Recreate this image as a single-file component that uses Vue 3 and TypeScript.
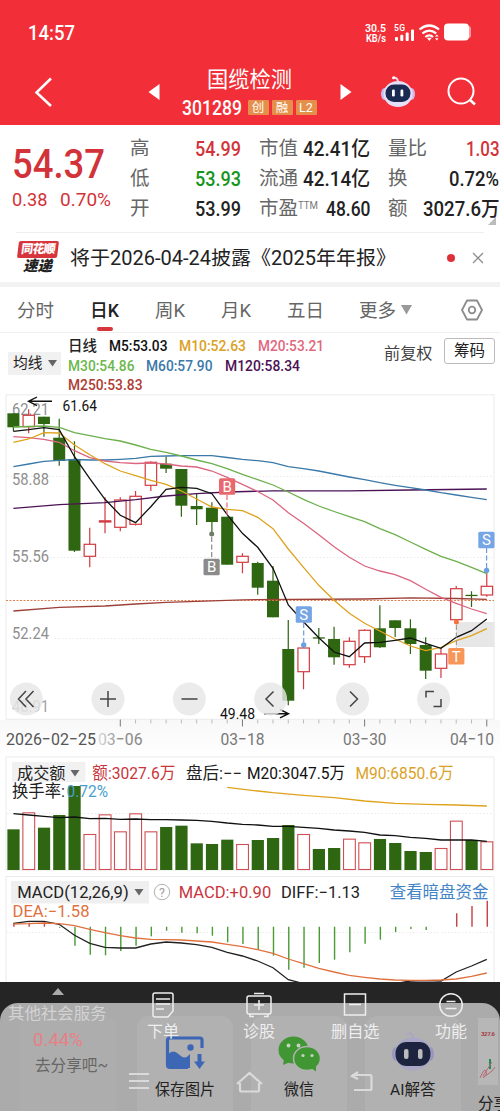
<script setup lang="ts">
import { h, type FunctionalComponent } from 'vue'

// Single line of text set to an exact width, vertically centred in its box.
const Fit: FunctionalComponent<{ t: string; w: number; s: number }> = (p) =>
  h('svg', { width: p.w, height: p.s, class: 'fit' }, [
    h('text', {
      x: 0, y: p.s * 0.86, 'font-size': p.s, textLength: p.w,
      lengthAdjust: 'spacingAndGlyphs', fill: 'currentColor',
    }, p.t),
  ])
Fit.props = ['t', 'w', 's']

const STEP = 15.27
const X0 = 13.4
const px = (i: number) => X0 + i * STEP

interface Candle { up: boolean; top: number; bot: number; hi: number; lo: number }
const raw: [number, number, number, number, number][] = [
  [0, 413.3, 427.3, 413.3, 431.3], [1, 415.3, 426.7, 409.3, 433.3], [0, 416.7, 424, 416.7, 436.7],
  [0, 437.7, 461, 418.7, 465.7], [0, 459, 550.7, 441.3, 552], [1, 544.3, 556.3, 527.7, 567.3],
  [1, 520.8, 522, 497.3, 533.3], [1, 500, 527.3, 497.3, 531.3], [1, 496.3, 524.3, 491, 525.5],
  [1, 462.3, 485.3, 461.3, 491], [0, 463.7, 468.7, 456.7, 473], [0, 469, 505.7, 469, 516.7],
  [0, 506, 509.3, 493.7, 525], [0, 507.7, 522, 502.3, 534], [0, 516.7, 564.7, 516.7, 564.7],
  [1, 556.3, 562.3, 553.3, 573.3], [0, 563, 587.7, 561.7, 594.7], [0, 580.7, 617.3, 566, 617.3],
  [0, 649, 700.7, 620, 705.3], [1, 648, 671.7, 644, 689.3], [0, 637.3, 638.6, 628, 644],
  [0, 639, 657.3, 626.7, 664.7], [1, 641.3, 664.7, 637.3, 667.7], [1, 630.3, 656.7, 629.3, 663],
  [0, 628.3, 647.3, 605.3, 648], [0, 620.3, 628, 620.3, 637], [0, 628.3, 644, 619.3, 654],
  [0, 645, 670.7, 637.3, 679], [1, 654, 668.3, 648.3, 678], [1, 588.7, 619.7, 586, 622],
  [0, 594.8, 596.1, 591.3, 607], [1, 586.3, 595, 571, 596.7],
]
const candles: Candle[] = raw.map(([u, top, bot, hi, lo]) => ({ up: u === 1, top, bot, hi, lo }))

const line = (ys: number[], start = 0) =>
  ys.map((y, i) => `${px(i + start).toFixed(1)},${y}`).join(' ')
const pairs = (ps: [number, number][]) => ps.map(([i, y]) => `${px(i).toFixed(1)},${y}`).join(' ')

const averages = [
  { c: '#9d4038', p: pairs([[0, 611], [3, 607.3], [6, 606], [8, 604], [10, 602.3], [12, 601.3], [15, 599.8], [23, 599], [26, 597.8], [29, 598.5], [31, 599.3]]) },
  { c: '#4b1355', p: pairs([[0, 508.3], [3, 504.7], [6, 502.7], [8, 499.7], [10, 496], [12, 493.7], [14, 492], [17, 490.8], [22, 490.8], [26, 490], [31, 489]]) },
  { c: '#3a79a8', p: line([466.7, 464, 461.3, 460.3, 459.5, 460, 460, 459.3, 458.3, 456.4, 456, 455.7, 455.7, 455.7, 457.5, 459.3, 460.7, 462.7, 466.7, 468.7, 471, 474, 477, 479.7, 482.7, 485.3, 487.7, 490, 492.7, 495, 497.3, 499.7]) },
  { c: '#6cb04c', p: line([427, 426.5, 426, 427.3, 432.7, 435.7, 438.7, 441, 445, 449.3, 452.3, 456, 460, 463.7, 468.7, 474.3, 479.7, 485, 492, 499.3, 506, 511.5, 516.7, 521.7, 528.7, 534.7, 542, 549.3, 556.3, 561.3, 567.3, 573.7]) },
  { c: '#dc6580', p: line([436.7, 437.7, 439.3, 442.3, 450.7, 457.7, 461, 462.7, 463.5, 463, 464, 466, 467, 471, 477.3, 484.3, 491.5, 500, 512.7, 523.3, 534.7, 546.7, 557.3, 566, 571, 574.7, 580.7, 589.3, 597.3, 603.3, 609, 613.7]) },
  { c: '#dfa21d', p: line([442.3, 439, 432.7, 433, 445, 454.7, 463.7, 471, 475.7, 480.3, 484.3, 491, 499, 507, 509.3, 510.7, 517.3, 528.7, 549, 567.3, 585.3, 600.3, 613.3, 623.3, 631, 639, 646, 650.7, 647.3, 640.7, 635.7, 628.7]) },
  { c: '#111', p: line([431.3, 429.7, 427.7, 429.7, 456.7, 478.7, 499.3, 515.3, 522.7, 506.7, 489.3, 487.3, 488.3, 493.7, 514.7, 533.3, 547.3, 568.3, 605, 621.7, 637.7, 652, 656.7, 643, 642.3, 640.3, 638, 643.3, 648.3, 637.3, 630.7, 619]) },
]

const volTops = [223, 172, 218, 180, 93, 237, 178, 229, 175, 229, 216, 212, 265, 267, 254, 267, 255, 249, 210, 237, 282, 279, 251, 262, 252, 264, 288, 291, 279, 197, 255, 259].map((z) => 755 + z / 3)
const volAvg = line([176, 180, 184, 188, 186, 191, 190, 193, 192, 194, 194, 195, 196, 199, 204, 208, 210, 214, 214, 217, 220, 225, 228, 232, 240, 242, 247, 250, 255, 255, 255, 259].map((z) => Math.round((755 + z / 3) * 10) / 10))
const volLong = pairs([[14, 787.3], [16, 791], [17, 792.7], [19, 795.3], [21, 797.7], [23, 801], [25, 803.3], [27, 804.3], [29, 805], [31, 806]])

const at870 = (z: number) => Math.round((870 + z / 3) * 10) / 10
const macd: [number, number, boolean][] = [
  160, 158, 156, 173, 227, 254, 256, 243, 227, 199, 182, 188, 190, 197, 217, 222, 239, 257, 299, 293, 279, 269, 247, 221, 209, 186, 177, 180, 170, 130, 108, 92,
].map((z, i): [number, number, boolean] => [i, at870(z), z < 170])
const diff = line([160, 154, 154, 163, 196, 220, 232, 234, 234, 222, 216, 219, 224, 232, 247, 258, 273, 293, 329, 341, 352, 362, 366, 362, 352, 341, 333, 332, 333, 306, 288, 268].map(at870))
const dea = line([162, 161, 159, 161, 167, 178, 188, 197, 204, 208, 209, 210, 213, 216, 223, 230, 239, 250, 267, 281, 295, 306, 316, 322, 327, 330, 331, 331, 330, 327, 319, 309].map(at870))

// [text, x, centre y, width, size, colour]
type Label = [string, number, number, number, number, string]
const axis: Label[] = [
  ['62.21', 12, 409.3, 37, 17, '#8f8f8f'], ['58.88', 12, 478.8, 37, 17, '#8f8f8f'],
  ['55.56', 12, 555.7, 37, 17, '#8f8f8f'], ['52.24', 12, 632.7, 37, 17, '#8f8f8f'],
  ['48.91', 12, 706, 37, 17, '#a3a3a3'],
]
const labels: Label[] = [
  ['61.64', 62.5, 405, 34.5, 15.5, '#111'], ['49.48', 220, 713.7, 35, 15.5, '#111'],
  ['2026−02−25', 6, 739, 90, 17, '#555'], ['03−18', 220.5, 739, 44, 17, '#777'],
  ['03−30', 343, 739, 43.5, 17, '#777'], ['04−10', 450, 739, 44, 17, '#777'],
  ['成交额', 17, 773, 48.5, 16, '#222'], ['额:3027.6万', 92.3, 773, 83, 16.5, '#c9353c'],
  ['盘后:−−', 186, 773, 56, 16.5, '#222'], ['M20:3047.5万', 247, 773, 98, 16.5, '#111'],
  ['M90:6850.6万', 355.5, 773, 98, 16.5, '#dba126'],
  ['换手率:', 12, 791.5, 53, 16.5, '#222'], ['0.72%', 66.5, 791.5, 41.5, 16.5, '#479fce'],
  ['MACD(12,26,9)', 17.2, 892.5, 111.5, 16.5, '#222'], ['MACD:+0.90', 178.7, 892.5, 92.5, 16.5, '#c9353c'],
  ['DIFF:−1.13', 281, 892.5, 79, 16.5, '#222'], ['查看暗盘资金', 389.7, 892.3, 98.7, 16.5, '#4384c6'],
  ['DEA:−1.58', 12.5, 911.3, 77, 16.5, '#e0713f'],
]
const markers: [string, number, number, string][] = [
  ['B', 219, 478.3, '#e9686e'], ['B', 203.5, 558.8, '#8b8b8b'], ['S', 295.7, 606.3, '#76a5e6'],
  ['S', 478.3, 531.8, '#76a5e6'], ['T', 448.2, 648, '#f79658'],
]
const circles = [26.3, 108, 189.3, 270.6, 352.6, 433.6]

const quotes = [
  [['高', '54.99', 46, 'red'], ['低', '53.93', 46, 'green'], ['开', '53.99', 46, '']],
  [['市值', '42.41亿', 67, ''], ['流通', '42.14亿', 67, ''], ['市盈', '48.60', 44.5, '']],
  [['量比', '1.03', 33.5, 'red'], ['换', '0.72%', 50, ''], ['额', '3027.6万', 76.5, '']],
] as [string, string, number, string][][]

const tabs: [string, number][] = [['分时', 37], ['日K', 29], ['周K', 30], ['月K', 30], ['五日', 37]]
const legend: [string, number, string][][] = [
  [['日线', 29, '#222'], ['M5:53.03', 58.5, '#111'], ['M10:52.63', 67, '#dba126'], ['M20:53.21', 66, '#e0677e']],
  [['M30:54.86', 66.5, '#6cb84c'], ['M60:57.90', 66.5, '#3a79a8'], ['M120:58.34', 75, '#4b1355']],
  [['M250:53.83', 74.5, '#ae3d35']],
]
</script>

<template>
  <div class="page">
    <header class="top">
      <div class="status">
        <Fit class="clock" t="14:57" :w="47" :s="19.5" />
        <div class="rate"><Fit t="30.5" :w="21" :s="10.5" /><Fit t="KB/s" :w="20" :s="10" /></div>
        <svg class="sig" width="80" height="20" fill="#fff">
          <text x="1" y="8" font-size="8.5" font-weight="600" textLength="11">5G</text>
          <rect x="2" y="14" width="3" height="4" rx="1" /><rect x="7.3" y="11.8" width="3" height="6.2" rx="1" />
          <rect x="12.7" y="9.5" width="3" height="8.5" rx="1" /><rect x="18" y="6.5" width="3" height="11.5" rx="1" />
          <path d="M26.5 6.5q9.8-8 19.6 0M29.4 10.4q7-5.7 13.8 0M32.3 14q4-3.3 7.8 0" fill="none" stroke="#fff" stroke-width="2.2" />
          <path d="M33.8 14.8h5l-2.5 3.2zM42 13.6l1.8-2.2 1.8 2.2zM42 15.2l1.8 2.2 1.8-2.2z" />
          <rect x="73" y="3" width="5" height="12" rx="2.5" opacity=".5" /><rect x="51" y=".5" width="25" height="17" rx="4" />
        </svg>
      </div>
      <div class="nav">
        <svg class="back" width="20" height="32"><path d="M17 2.5 2.5 16.5 17 30" fill="none" stroke="#fff" stroke-width="2.5" /></svg>
        <svg class="prev" width="12" height="18"><path d="M11.5 1v16L.5 9z" fill="#fff" /></svg>
        <div class="title">
          <Fit class="name" t="国缆检测" :w="85" :s="21.5" />
          <div class="code"><Fit class="num" t="301289" :w="60" :s="19.5" /><span>创</span><span>融</span><span>L2</span></div>
        </div>
        <svg class="next" width="12" height="18"><path d="M.5 1v16l11-8z" fill="#fff" /></svg>
        <svg class="bot" width="36" height="34" viewBox="0 0 36 34">
          <path d="M18 7q0-4-4-4.5" fill="none" stroke="#e8d6f2" stroke-width="1.8" /><circle cx="13.5" cy="2.8" r="1.5" fill="#fff" />
          <ellipse cx="4.5" cy="19" rx="3.5" ry="6" fill="#c6bdf0" /><ellipse cx="31.5" cy="19" rx="3.5" ry="6" fill="#d6b8e8" />
          <ellipse cx="18" cy="19" rx="14.5" ry="13" fill="#e6dff8" /><rect x="5.5" y="9.5" width="25" height="17.5" rx="8.5" fill="#1b2a50" />
          <rect x="12" y="14.5" width="2.8" height="7" rx="1.2" fill="#fff" /><rect x="20.5" y="14.5" width="2.8" height="7" rx="1.2" fill="#fff" />
        </svg>
        <svg class="search" width="30" height="30" fill="none" stroke="#fff" stroke-width="2"><circle cx="14" cy="14" r="12.5" /><path d="m22.5 22.5 5.5 5" stroke-width="2.5" /></svg>
      </div>
    </header>

    <section class="quote">
      <div class="price">
        <Fit class="big" t="54.37" :w="93" :s="40" />
        <div class="chg"><Fit t="0.38" :w="35.5" :s="19" /><Fit t="0.70%" :w="51" :s="19" /></div>
      </div>
      <div v-for="(col, c) in quotes" :key="c" class="col">
        <div v-for="q in col" :key="q[0]" class="cell">
          <Fit class="lab" :t="q[0]" :w="q[0].length * 19.5" :s="19.5" />
          <Fit v-if="q[0] === '市盈'" class="ttm" t="TTM" :w="20" :s="10" />
          <Fit class="val" :class="q[3]" :t="q[1]" :w="q[2]" :s="20.5" />
        </div>
      </div>
      <svg class="corner" width="8" height="8"><path d="M8 0v8H0z" fill="#bbb" /></svg>
    </section>

    <section class="news">
      <div class="logo"><b>同花顺</b><i>速递</i></div>
      <Fit class="msg" t="将于2026-04-24披露《2025年年报》" :w="326" :s="19.5" />
      <span class="dot"></span>
      <svg width="12" height="12"><path d="m1 1 10 10M11 1 1 11" stroke="#8c8c8c" stroke-width="1.3" /></svg>
    </section>

    <nav class="tabs">
      <div v-for="t in tabs" :key="t[0]" class="tab" :class="{ on: t[0] === '日K' }"><Fit :t="t[0]" :w="t[1]" :s="18.5" /></div>
      <div class="tab more"><Fit t="更多" :w="37" :s="18.5" /><svg width="11" height="10"><path d="M0 0h11L5.5 9.5z" fill="#999" /></svg></div>
      <svg class="hex" width="24" height="24" fill="none" stroke="#8c8c8c" stroke-width="1.8"><path d="M7 2.5h10l5 9.5-5 9.5H7L2 12z" stroke-linejoin="round" /><circle cx="12" cy="12" r="3.3" /></svg>
    </nav>

    <section class="legend">
      <div class="pick"><Fit t="均线" :w="29.5" :s="14.5" /><svg width="9" height="7"><path d="M0 0h9L4.5 6.5z" fill="#666" /></svg></div>
      <div class="rows">
        <div v-for="(r, i) in legend" :key="i" class="row">
          <Fit v-for="m in r" :key="m[0]" :t="m[0]" :w="m[1]" :s="14.5" :style="{ color: m[2] }" />
        </div>
      </div>
      <Fit class="adj" t="前复权" :w="48.5" :s="16" />
      <div class="chip"><Fit t="筹码" :w="31" :s="15.5" /></div>
    </section>

    <svg class="chart" width="500" height="588" viewBox="0 394 500 588">
      <defs>
        <linearGradient id="fade"><stop offset="0" stop-color="#ddd" /><stop offset=".5" stop-color="#888" /></linearGradient>
        <linearGradient id="foot" x2="0" y2="1"><stop offset="0" stop-color="#f8f8f8" /><stop offset="1" stop-color="#fff" /></linearGradient>
      </defs>
      <rect x="0" y="720" width="500" height="36" fill="url(#foot)" />
      <g fill="none" stroke="#ebebeb">
        <rect x="6" y="394.8" width="488" height="324.5" /><rect x="6" y="757" width="488" height="113" /><path d="M6 990V876.5h488V990" />
        <path d="M7 476.5h486M50 557.5h443M55 638.5h438M7 813.5h486M7 932.5h486" stroke-dasharray="1.5 2" />
      </g>
      <rect x="456" y="622" width="38.5" height="25" fill="#e7e7e7" />
      <text v-for="l in axis" :key="l[0]" :x="l[1]" :y="l[2] + l[4] * 0.355" :font-size="l[4]" :textLength="l[3]" lengthAdjust="spacingAndGlyphs" :fill="l[5]">{{ l[0] }}</text>

      <g v-for="(k, i) in candles" :key="i" :stroke="k.up ? '#d13a40' : '#2c6410'" stroke-width="1.2">
        <path :d="`M${px(i)} ${k.hi}V${k.up ? k.top : k.lo}M${px(i)} ${k.bot}V${k.lo}`" />
        <rect v-if="k.up" :x="px(i) - 5.6" :y="k.top" width="11.4" :height="k.bot - k.top" fill="#fff" />
        <rect v-else :x="px(i) - 6" :y="k.top" width="12" :height="k.bot - k.top" fill="#2f6612" stroke="none" />
      </g>
      <path d="M6 600.5h488" stroke="#e58150" stroke-dasharray="2 1.5" />
      <polyline v-for="a in averages" :key="a.c" :points="a.p" fill="none" :stroke="a.c" stroke-width="1.3" />

      <g fill="none" stroke-width="1.2" stroke-dasharray="5 2.5">
        <path d="M227 495v20" stroke="#e9686e" /><path d="M211.7 537v22" stroke="#8b8b8b" />
        <path d="M303.7 623v20M486.6 548v20" stroke="#6d9bd8" /><path d="M456.4 625v23" stroke="#a39a94" />
      </g>
      <circle cx="211.7" cy="534" r="2.5" fill="#6f7b6b" /><circle cx="303.7" cy="645" r="2.7" fill="#6d9fe2" />
      <circle cx="486.6" cy="570.5" r="2.7" fill="#6d9fe2" /><circle cx="456.4" cy="622" r="2.5" fill="#f4733b" />
      <g v-for="(m, i) in markers" :key="i">
        <rect :x="m[1]" :y="m[2]" width="16.2" height="16.5" rx="1.5" :fill="m[3]" />
        <text :x="m[1] + 8.1" :y="m[2] + 13.5" font-size="15" text-anchor="middle" fill="#fff">{{ m[0] }}</text>
      </g>
      <path d="M52 401.3H29M37 397l-8.5 4.3 8.5 4.3M264 713.7h24M280 709.5l8.5 4.2-8.5 4.2" fill="none" stroke="#111" stroke-width="1.4" />

      <circle v-for="c in circles" :key="c" :cx="c" cy="699" r="16.5" fill="#e6e6e6" fill-opacity=".82" />
      <g fill="none" stroke="#444" stroke-width="1.5">
        <path d="m26 691-7.5 8 7.5 8M33.5 691l-7.5 8 7.5 8M100 699h16M108 691v16M181.5 699h16M273.5 691.5l-7.5 7.5 7.5 7.5M350 691.5l7.5 7.5-7.5 7.5" />
        <path d="M426 697.5v-6h8M441 699v7.5h-7.5" />
      </g>

      <path v-for="n in 25" :key="n" :d="`M${px(n + 6)} 719.5v${[1, 9, 17, 25].includes(n) ? 7 : 4}`" :stroke="[1, 9, 17, 25].includes(n) ? '#777' : '#bbb'" />
      <text x="98" y="745" font-size="17" textLength="44.5" lengthAdjust="spacingAndGlyphs" fill="url(#fade)">03−06</text>

      <template v-for="(v, i) in volTops" :key="i">
        <rect v-if="candles[i].up" :x="px(i) - 5.8" :y="v + 0.5" width="11.8" :height="869 - v" fill="#fff" stroke="#cf5054" stroke-width="1.1" />
        <rect v-else :x="px(i) - 6" :y="v" width="12.2" :height="870 - v" fill="#2f6612" />
      </template>
      <polyline :points="volAvg" fill="none" stroke="#111" stroke-width="1.3" />
      <polyline :points="volLong" fill="none" stroke="#dfa21d" stroke-width="1.3" />

      <rect x="12" y="762" width="73.5" height="20" fill="#f1f1f1" /><path d="M70.5 770h9l-4.5 6.5z" fill="#666" />
      <rect x="11" y="881" width="138" height="22.5" fill="#efefef" /><path d="M134.5 889h9l-4.5 6.5z" fill="#666" />
      <circle cx="162" cy="892" r="7.7" fill="none" stroke="#b0b0b0" /><text x="162" y="896.5" font-size="12.5" text-anchor="middle" fill="#a0a0a0">?</text>

      <path v-for="m in macd" :key="m[0]" :d="`M${px(m[0]) + 0.5} 926.7V${m[1]}`" :stroke="m[2] ? '#c34046' : '#4a9a35'" stroke-width="1.4" />
      <polyline :points="diff" fill="none" stroke="#222" stroke-width="1.3" />
      <polyline :points="dea" fill="none" stroke="#e0713f" stroke-width="1.3" />
      <text v-for="l in labels" :key="l[0]" :x="l[1]" :y="l[2] + l[4] * 0.355" :font-size="l[4]" :textLength="l[3]" lengthAdjust="spacingAndGlyphs" :fill="l[5]">{{ l[0] }}</text>
    </svg>

    <footer class="foot">
      <div class="sheet">
        <div class="card first"><Fit class="pct" t="0.44%" :w="50" :s="18" /><Fit class="go" t="去分享吧~" :w="73" :s="16" /></div>
        <div class="card">
          <svg width="40" height="36" fill="none" stroke="#3d66b5" stroke-width="3.2">
            <path d="M37 12V4q0-2-2-2H5Q2.5 2 2.5 4.5V29q0 2.5 2.5 2.5h18" /><path d="M3 18.5q5-6 11 0t11-.5v14H5q-2 0-2-2z" fill="#3d66b5" stroke="none" />
            <circle cx="25.5" cy="11.5" r="3.2" fill="#3d66b5" stroke="none" /><path d="M34.5 18v8" stroke-width="4" /><path d="M29 25.5h11L34.5 33z" fill="#3d66b5" stroke="none" />
          </svg>
          <Fit t="保存图片" :w="60" :s="15.5" />
        </div>
        <div class="card">
          <svg width="44" height="36" fill="#419634"><ellipse cx="16.5" cy="14" rx="15" ry="13.5" /><path d="m7 23-1 6 7-3z" />
            <ellipse cx="30" cy="22.5" rx="13.5" ry="12" stroke="#b2b2b2" stroke-width="1.5" /><path d="m34 32 5 3.5v-6z" />
            <g fill="#c3d6bd"><circle cx="11.5" cy="9.5" r="1.9" /><circle cx="21.5" cy="9.5" r="1.9" /><circle cx="26" cy="19.5" r="1.6" /><circle cx="35" cy="19.5" r="1.6" /></g></svg>
          <Fit t="微信" :w="30" :s="15.5" />
        </div>
        <div class="card">
          <svg width="44" height="42" viewBox="0 0 44 42"><path d="M22 8q0-5-5-5" fill="none" stroke="#aaa4bd" stroke-width="2" /><circle cx="17" cy="3.5" r="2" fill="#b0aabc" />
            <ellipse cx="5" cy="24" rx="4" ry="7" fill="#9894c2" /><ellipse cx="39" cy="24" rx="4" ry="7" fill="#9894c2" />
            <ellipse cx="22" cy="24" rx="18.5" ry="16.5" fill="#aaa6c6" /><rect x="4.5" y="12" width="35" height="24" rx="11" fill="#1c2440" />
            <rect x="13" y="19" width="4.5" height="10" rx="2" fill="#bbb" /><rect x="27" y="19" width="4.5" height="10" rx="2" fill="#bbb" /></svg>
          <Fit t="AI解答" :w="45.5" :s="15.5" />
        </div>
        <div class="card last">
          <svg width="20" height="70"><rect width="20" height="67" fill="#b7b7b7" /><text x="3" y="17.5" font-size="6" font-weight="700" textLength="14" fill="#a83a46">327.6</text>
            <path d="M12 41v10" stroke="#278a5a" stroke-width="2" /><path d="M2 60q4-10 6-7t-2 6 8-6l3-4M5 58l9-14" fill="none" stroke="#b56a72" /></svg>
          <Fit t="分享" :w="31" :s="15.5" />
        </div>
      </div>
      <div class="tools">
        <div class="tool wide"><svg width="12" height="7"><path d="M0 7h12L6 0z" fill="#ababab" /></svg><Fit t="其他社会服务" :w="98.5" :s="16" /></div>
        <div class="tool">
          <svg width="24" height="26" fill="none" stroke="currentColor" stroke-width="1.5"><path d="M4 1h16q2 0 2 2v16l-5 6H4q-2 0-2-2V3q0-2 2-2zM5 7h14M5 12h14M5 17h8" /></svg>
          <Fit t="下单" :w="32" :s="16" />
        </div>
        <div class="tool">
          <svg width="28" height="26" fill="none" stroke="currentColor" stroke-width="1.5"><rect x="2" y="4" width="24" height="18" rx="2" /><path d="M9 1.5h10M14 8v10M9 13h10M5 22v2.5h4M23 22v2.5h-4" /></svg>
          <Fit t="诊股" :w="32" :s="16" />
        </div>
        <div class="tool">
          <svg width="24" height="26" fill="none" stroke="currentColor" stroke-width="1.5"><rect x="1.5" y="2" width="21" height="21" /><path d="M6 12.5h12" /></svg>
          <Fit t="删自选" :w="48.5" :s="16" />
        </div>
        <div class="tool">
          <svg width="26" height="26" fill="none" stroke="currentColor" stroke-width="1.5"><circle cx="13" cy="13" r="11.3" /><path d="M8.5 9.5h9M7.5 16.5h11" /></svg>
          <Fit t="功能" :w="32" :s="16" />
        </div>
      </div>
      <svg class="sys" width="260" height="22" fill="none" stroke="#dadada" stroke-width="2.2">
        <path d="M1 3h20M1 10h20M1 17h20M109 13 121.5 2 134 13M112 12v7q0 1.5 1.5 1.5h16q1.5 0 1.5-1.5v-7M230 1l-6 4 6 3M224 4h18q1.5 0 1.5 1.5v12q0 1.5-1.5 1.5h-16" />
      </svg>
    </footer>
  </div>
</template>

<style>
body { background: #fff; overflow: hidden; }
</style>

<style scoped>
.page { width: 500px; height: 1111px; overflow: hidden; font-family: Roboto, "Noto Sans CJK SC", sans-serif; background: #fff; color: #222; }
svg { display: block; flex: none; overflow: visible; }
.top { height: 125px; background: #f22f38; color: #fff; }
.status { display: flex; align-items: center; height: 62px; padding: 4px 27px 0 28px; box-sizing: border-box; }
.clock { font-weight: 500; }
.rate { margin-left: auto; margin-right: 7px; display: flex; flex-direction: column; align-items: center; font-weight: 600; }
.nav { display: flex; align-items: center; height: 59px; padding-left: 34px; box-sizing: border-box; }
.prev { margin-left: 94px; }
.title { margin-left: 20px; width: 138px; display: flex; flex-direction: column; align-items: center; gap: 9px; padding-top: 2px; }
.code { display: flex; align-items: center; gap: 3px; }
.num { font-weight: 500; margin-right: 3px; }
.code span { width: 21px; height: 15px; line-height: 15px; font-size: 12.5px; text-align: center; background: #e58f4a; border-radius: 1px; }
.next { margin-left: 22px; }
.bot { margin-left: 28px; }
.search { margin-left: 31px; }
.quote { position: relative; display: grid; grid-template-columns: 118px 129px 129px 111px; height: 107px; padding: 8px 0 0 12px; box-sizing: border-box; }
.price { color: #d2333a; padding-top: 11px; }
.big { font-weight: 500; }
.chg { display: flex; gap: 12px; margin-top: 6px; }
.cell { display: flex; align-items: center; height: 30px; }
.col { padding-right: 18px; }
.col:last-of-type { padding-right: 0; }
.lab { color: #666; }
.ttm { color: #777; margin-bottom: 7px; }
.val { margin-left: auto; font-weight: 500; }
.red { color: #d2333a; }
.green { color: #14951c; }
.corner { position: absolute; right: 4px; bottom: 7px; }
.news { display: flex; align-items: center; height: 50px; margin: 0 16px; border-top: 1px solid #eee; box-sizing: border-box; }
.logo { width: 41px; display: flex; flex-direction: column; align-items: center; margin-right: 12px; margin-left: 1px; }
.logo b { width: 40px; height: 17px; line-height: 17px; text-align: center; font-size: 12px; font-weight: 900; color: #fff; background: #d7353c; border-radius: 2px; transform: skewX(-7deg); letter-spacing: -.8px; }
.logo i { font-size: 14.5px; line-height: 15px; font-weight: 900; margin-top: 1px; }
.dot { width: 8px; height: 8px; border-radius: 50%; background: #dd3038; margin-left: auto; margin-right: 17px; }
.tabs { display: flex; height: 51px; padding: 5px 16px 0 17px; border-top: 5px solid #f3f3f3; border-bottom: 1px solid #f0f0f0; box-sizing: border-box; color: #666; }
.tab { position: relative; display: flex; align-items: center; height: 36px; margin-right: 36px; }
.on { color: #222; font-weight: 500; }
.on::after { content: ""; position: absolute; left: 7px; bottom: -3px; width: 16px; height: 4px; border-radius: 2px; background: #d7353c; }
.more { gap: 5px; margin: 0 0 0 -1px; }
.hex { margin: 6px 0 0 auto; }
.legend { display: flex; height: 61px; box-sizing: border-box; padding: 0 5px 0 8px; }
.pick { display: flex; align-items: center; gap: 5px; width: 53px; height: 23px; margin-top: 19px; padding-left: 5px; box-sizing: border-box; background: #f1f1f1; }
.rows { width: 316px; padding: 4px 0 0 7px; box-sizing: border-box; font-weight: 500; }
.row { display: flex; align-items: center; gap: 12px; height: 19.2px; }
.adj { margin: 12px 12px 0 7px; color: #444; }
.chip { display: flex; align-items: center; justify-content: center; width: 51px; height: 26px; margin-top: 5px; border: 1px solid #bbb; border-radius: 3px; box-sizing: border-box; }
.foot { position: relative; height: 129px; background: #252525; }
.sheet { position: absolute; left: 0; right: 0; top: 21px; bottom: 0; padding-left: 20px; display: flex; gap: 18px; background: #ababab; border-radius: 18px 18px 0 0; overflow: hidden; }
.card { flex: none; width: 96px; height: 110px; margin-top: 13px; border-radius: 12px; background: #b1b1b1; display: flex; flex-direction: column; align-items: center; justify-content: flex-end; box-sizing: border-box; padding-bottom: 29px; gap: 10px; color: #222; }
.first { justify-content: flex-start; padding: 15px 0 0; gap: 8px; background: #adadad; margin-right: 2.5px; }
.pct { color: #e97f84; margin-right: 20px; }
.go { color: #666; margin-left: 6px; }
.last { background: none; padding: 0; margin-top: 15px; margin-left: -1px; align-items: flex-start; justify-content: flex-start; gap: 8px; }
.tools { position: relative; display: flex; padding: 10px 0 0 8px; color: #eee; }
.tool { width: 96px; display: flex; flex-direction: column; align-items: center; gap: 5px; }
.wide { width: 99px; color: #d3d3d3; margin-right: 8px; margin-top: -4px; gap: 10px; }
.sys { position: absolute; left: 128px; top: 89px; }
</style>
